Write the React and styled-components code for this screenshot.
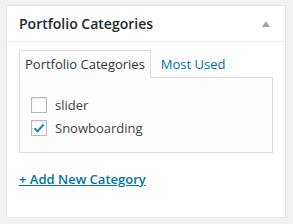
import React from 'react';
import styled, { createGlobalStyle } from 'styled-components';

const GlobalStyle = createGlobalStyle`
  body {
    margin: 0;
    background: #f1f1f1;
    font-family: "Open Sans", "Liberation Sans", sans-serif;
    color: #444;
  }
`;

const Postbox = styled.div`
  margin: 5px 0 0 6px;
  width: 280px;
  box-sizing: border-box;
  background: #fff;
  border: 1px solid #e5e5e5;
  box-shadow: 0 1px 1px rgba(0, 0, 0, 0.04);
`;

const Header = styled.div`
  display: flex;
  align-items: center;
  justify-content: space-between;
  height: 35px;
  padding: 0 15px 0 12px;
  border-bottom: 1px solid #eee;
`;

const Title = styled.h3`
  margin: 0;
  font-size: 14px;
  font-weight: 600;
  color: #23282d;
`;

const Toggle = styled.span`
  width: 0;
  height: 0;
  border-left: 4px solid transparent;
  border-right: 4px solid transparent;
  border-bottom: 6px solid #a0a5aa;
  margin-top: 1px;
`;

const Inside = styled.div`
  padding: 8px 12px 28px;
`;

const Tabs = styled.div`
  display: flex;
  align-items: flex-end;
  margin-bottom: -1px;
  position: relative;
`;

const Tab = styled.div`
  font-size: 13px;
  line-height: 18px;
  padding: 4px 5px 4px;
  border: 1px solid ${p => (p.$active ? '#ddd' : 'transparent')};
  border-bottom: 1px solid ${p => (p.$active ? '#fdfdfd' : 'transparent')};
  background: ${p => (p.$active ? '#fdfdfd' : 'transparent')};
  color: ${p => (p.$active ? '#32373c' : '#0073aa')};
  margin-right: ${p => (p.$active ? '4px' : '0')};
`;

const Panel = styled.div`
  border: 1px solid #ddd;
  background: #fdfdfd;
  padding: 19px 11px 16px;
  display: flex;
  flex-direction: column;
  gap: 7px;
`;

const Item = styled.label`
  display: flex;
  align-items: center;
  gap: 8px;
  height: 16px;
  font-size: 13px;
  color: #444;
`;

const Box = styled.span`
  width: 16px;
  height: 16px;
  box-sizing: border-box;
  border: 1px solid #b4b9be;
  background: #fff;
  box-shadow: inset 0 1px 2px rgba(0, 0, 0, 0.1);
  display: flex;
  align-items: center;
  justify-content: center;
`;

const AddLink = styled.a`
  display: inline-block;
  margin-top: 16px;
  font-size: 13px;
  line-height: 20px;
  font-weight: 600;
  color: #0073aa;
  text-decoration: underline;
`;

const Check = () => (
  <svg width="12" height="12" viewBox="0 0 12 12">
    <path d="M1.5 6.2 L4.6 9.2 L10.6 2.6" fill="none" stroke="#1e8cbe" strokeWidth="2.2" />
  </svg>
);

export default function App() {
  return (
    <>
      <GlobalStyle />
      <Postbox>
        <Header>
          <Title>Portfolio Categories</Title>
          <Toggle />
        </Header>
        <Inside>
          <Tabs>
            <Tab $active>Portfolio Categories</Tab>
            <Tab>Most Used</Tab>
          </Tabs>
          <Panel>
            <Item>
              <Box />
              slider
            </Item>
            <Item>
              <Box>
                <Check />
              </Box>
              Snowboarding
            </Item>
          </Panel>
          <AddLink href="#">+ Add New Category</AddLink>
        </Inside>
      </Postbox>
    </>
  );
}
